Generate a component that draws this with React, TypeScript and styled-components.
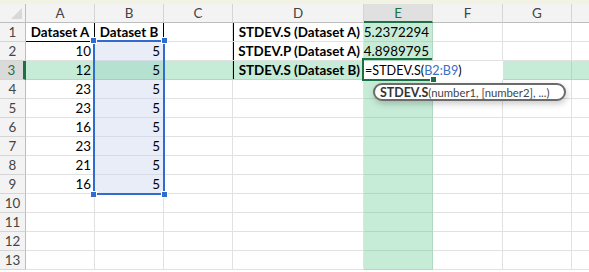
import React from 'react'
import styled, { createGlobalStyle, css } from 'styled-components'

const GlobalStyle = createGlobalStyle`
  html, body {
    margin: 0;
    padding: 0;
    background: #ffffff;
    overflow: hidden;
  }
  body {
    font-family: Lato, 'Open Sans', sans-serif;
  }
`

type Tone = 'plain' | 'green' | 'sel' | 'selGreen' | 'white'

const tones: Record<Tone, { bg: string; line: string }> = {
  plain: { bg: '#ffffff', line: '#e1e1e1' },
  green: { bg: '#c6ecd7', line: '#b0d9c2' },
  sel: { bg: '#e9edf7', line: '#d6dbe7' },
  selGreen: { bg: '#b5e1d1', line: '#a3cfbf' },
  white: { bg: '#ffffff', line: '#ffffff' }
}

// the last column only shows its left edge, so it gets no visible letter
const COLS = ['A', 'B', 'C', 'D', 'E', 'F', 'G', 'H']
const ROWS = 13

interface CellData {
  text?: string
  bold?: boolean
  align?: 'left' | 'right' | 'center'
  boxed?: boolean
  leftRule?: boolean
  formula?: boolean
}

const values: Record<string, CellData> = {
  A1: { text: 'Dataset A', bold: true, align: 'center', boxed: true },
  B1: { text: 'Dataset B', bold: true, align: 'center', boxed: true },
  D1: { text: 'STDEV.S (Dataset A)', bold: true, align: 'right', leftRule: true },
  D2: { text: 'STDEV.P (Dataset A)', bold: true, align: 'right', leftRule: true },
  D3: { text: 'STDEV.S (Dataset B)', bold: true, align: 'right', leftRule: true },
  E1: { text: '5.2372294', align: 'right' },
  E2: { text: '4.8989795', align: 'right' },
  E3: { formula: true, align: 'left' }
}

const colA = [10, 12, 23, 23, 16, 23, 21, 16]
colA.forEach((n, i) => {
  values[`A${i + 2}`] = { text: String(n), align: 'right' }
  values[`B${i + 2}`] = { text: '5', align: 'right' }
})

const toneFor = (col: string, row: number): Tone => {
  if (col === 'E' && row === 3) return 'white'
  if (col === 'F' && row === 3) return 'white'
  const inSel = col === 'B' && row >= 2 && row <= 9
  if (inSel && row === 3) return 'selGreen'
  if (inSel) return 'sel'
  if (row === 3 || col === 'E') return 'green'
  return 'plain'
}

const App: React.FC = () => {
  return (
    <>
      <GlobalStyle />
      <Window>
        <TopStrip />
        <Sheet>
          <Grid>
            <Corner>
              <CornerMark />
            </Corner>
            {COLS.map((c) => (
              <ColHead key={c} $active={c === 'E'}>
                {c === 'H' ? '' : c}
              </ColHead>
            ))}
            {Array.from({ length: ROWS }, (_, i) => i + 1).map((r) => (
              <React.Fragment key={r}>
                <RowHead $active={r === 3}>{r}</RowHead>
                {COLS.map((c) => {
                  const data = values[`${c}${r}`]
                  return (
                    <Cell
                      key={c}
                      $tone={toneFor(c, r)}
                      $bold={data?.bold}
                      $align={data?.align}
                      $boxed={data?.boxed}
                      $leftRule={data?.leftRule}
                      $raised={data?.formula}
                    >
                      {data?.formula ? (
                        <Formula>
                          =STDEV.S(<RefText>B2:B9</RefText>)
                        </Formula>
                      ) : (
                        data?.text
                      )}
                    </Cell>
                  )
                })}
              </React.Fragment>
            ))}
          </Grid>

          <Selection>
            <Handle $x="left" $y="top" />
            <Handle $x="right" $y="top" />
            <Handle $x="left" $y="bottom" />
            <Handle $x="right" $y="bottom" />
          </Selection>

          <ActiveCell>
            <FillHandle />
          </ActiveCell>

          <Tip>
            <b>STDEV.S</b>(number1, [number2], ...)
          </Tip>
        </Sheet>
      </Window>
    </>
  )
}

const Window = styled.div`
  width: 589px;
  height: 272px;
  overflow: hidden;
  background: #ffffff;
`

const TopStrip = styled.div`
  height: 4px;
  background: #f2f3e4;
`

const Sheet = styled.div`
  position: relative;
`

const Grid = styled.div`
  display: grid;
  width: 642px;
  grid-template-columns: 26px 69px 69px 69px 131px 69px 70px 69px 70px;
  grid-auto-rows: 19px;
  font-size: 13.4px;
  color: #000000;
`

const headBase = css`
  box-sizing: border-box;
  background: #f3f3f3;
  color: #444444;
  display: flex;
  align-items: center;
  justify-content: center;
  font-size: 13.4px;
`

const Corner = styled.div`
  ${headBase};
  position: relative;
  border-right: 1px solid #bdbdbd;
  border-bottom: 1px solid #bdbdbd;
`

const CornerMark = styled.div`
  position: absolute;
  right: 3px;
  bottom: 3px;
  width: 0;
  height: 0;
  border-left: 11px solid transparent;
  border-bottom: 11px solid #d8d8d8;
`

const ColHead = styled.div<{ $active?: boolean }>`
  ${headBase};
  border-right: 1px solid #d5d5d5;
  border-bottom: 1px solid #bdbdbd;
  ${(p) =>
    p.$active &&
    css`
      background: #e0e0e0;
      color: #1e7145;
      border-bottom: 2px solid #1e7145;
    `}
`

const RowHead = styled.div<{ $active?: boolean }>`
  ${headBase};
  border-right: 1px solid #bdbdbd;
  border-bottom: 1px solid #d5d5d5;
  ${(p) =>
    p.$active &&
    css`
      background: #dadada;
      color: #1e7145;
      border-right: 3px solid #1e7145;
    `}
`

const Cell = styled.div<{
  $tone: Tone
  $bold?: boolean
  $align?: 'left' | 'right' | 'center'
  $boxed?: boolean
  $leftRule?: boolean
  $raised?: boolean
}>`
  box-sizing: border-box;
  display: flex;
  align-items: center;
  padding: 0 3px 0 3px;
  white-space: nowrap;
  min-width: 0;
  background: ${(p) => tones[p.$tone].bg};
  border-right: 1px solid ${(p) => tones[p.$tone].line};
  border-bottom: 1px solid ${(p) => tones[p.$tone].line};
  font-weight: ${(p) => (p.$bold ? 700 : 400)};
  justify-content: ${(p) =>
    p.$align === 'right' ? 'flex-end' : p.$align === 'center' ? 'center' : 'flex-start'};
  ${(p) =>
    p.$raised &&
    css`
      position: relative;
      z-index: 1;
    `}
  ${(p) =>
    p.$boxed &&
    css`
      border-right: 1px solid #000000;
      border-bottom: 1px solid #000000;
    `}
  ${(p) =>
    p.$leftRule &&
    css`
      box-shadow: inset 1px 0 0 #000000;
    `}
`

const Formula = styled.span`
  margin-left: -2px;
  color: #000000;
  font-size: 12.6px;
`

const RefText = styled.span`
  color: #3b6fc4;
`

const Selection = styled.div`
  position: absolute;
  left: 93px;
  top: 36px;
  width: 72px;
  height: 155px;
  box-sizing: border-box;
  border: 2px solid #2f6bd0;
  pointer-events: none;
`

const Handle = styled.div<{ $x: 'left' | 'right'; $y: 'top' | 'bottom' }>`
  position: absolute;
  width: 5px;
  height: 5px;
  background: #2f6bd0;
  border: 1px solid #ffffff;
  ${(p) => (p.$x === 'left' ? 'left: -5px;' : 'right: -5px;')}
  ${(p) => (p.$y === 'top' ? 'top: -5px;' : 'bottom: -5px;')}
`

const ActiveCell = styled.div`
  position: absolute;
  left: 362px;
  top: 54px;
  width: 70px;
  height: 23px;
  box-sizing: border-box;
  border: 2px solid #1e6e43;
  border-right: none;
  pointer-events: none;
  z-index: 3;
`

const FillHandle = styled.div`
  position: absolute;
  right: -5px;
  bottom: -4px;
  width: 5px;
  height: 5px;
  background: #1e6e43;
  border: 1px solid #ffffff;
`

const Tip = styled.div`
  position: absolute;
  left: 373px;
  top: 79px;
  width: 193px;
  height: 18px;
  box-sizing: border-box;
  border: 2px solid #6b6b6b;
  border-radius: 9px;
  background: #ffffff;
  box-shadow: 1px 3px 6px rgba(0, 0, 0, 0.2);
  display: flex;
  align-items: center;
  padding-left: 5px;
  font-size: 11.3px;
  color: #444444;
  white-space: nowrap;
  z-index: 4;
  b {
    color: #333333;
    font-weight: 700;
    font-size: 12.4px;
  }
`

export default App
